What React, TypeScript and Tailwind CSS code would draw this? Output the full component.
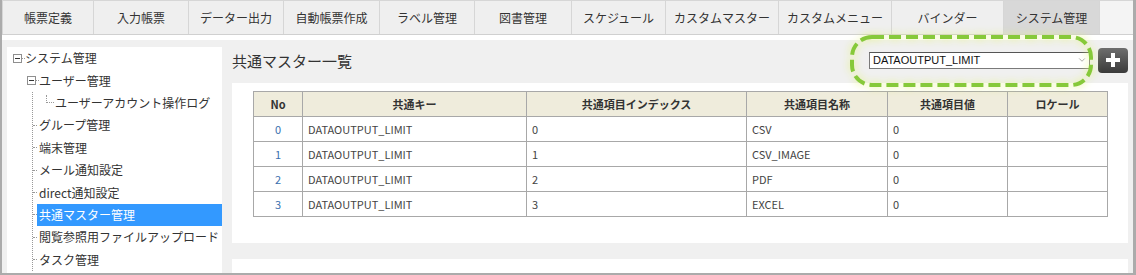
import { ChevronDown } from 'lucide-react';

const tabs = [
  { label: '帳票定義', w: 'w-[92px]' },
  { label: '入力帳票', w: 'w-[95px]' },
  { label: 'データー出力', w: 'w-[95px]' },
  { label: '自動帳票作成', w: 'w-[96px]' },
  { label: 'ラベル管理', w: 'w-[95px]' },
  { label: '図書管理', w: 'w-[97px]' },
  { label: 'スケジュール', w: 'w-[94px]' },
  { label: 'カスタムマスター', w: 'w-[113px]' },
  { label: 'カスタムメニュー', w: 'w-[113px]' },
  { label: 'バインダー', w: 'w-[112px]' },
  { label: 'システム管理', w: 'w-[96px]', active: true },
];

const menu = [
  'グループ管理',
  '端末管理',
  'メール通知設定',
  'direct通知設定',
  '共通マスター管理',
  '閲覧参照用ファイルアップロード',
  'タスク管理',
];

const rows = [
  { no: 0, key: 'DATAOUTPUT_LIMIT', idx: '0', name: 'CSV', val: '0' },
  { no: 1, key: 'DATAOUTPUT_LIMIT', idx: '1', name: 'CSV_IMAGE', val: '0' },
  { no: 2, key: 'DATAOUTPUT_LIMIT', idx: '2', name: 'PDF', val: '0' },
  { no: 3, key: 'DATAOUTPUT_LIMIT', idx: '3', name: 'EXCEL', val: '0' },
];

function MinusBox() {
  return (
    <svg width="9" height="9" viewBox="0 0 9 9" className="shrink-0">
      <rect x="0.5" y="0.5" width="8" height="8" fill="#fff" stroke="#8f8f8f" />
      <line x1="2" y1="4.5" x2="7" y2="4.5" stroke="#333" />
    </svg>
  );
}

export default function App() {
  return (
    <div className="w-[1136px] h-[275px] overflow-hidden bg-[#f0f0f0] border-l-2 border-r-[3px] border-b-2 border-[#ababab] font-['Noto_Sans_CJK_JP',sans-serif] text-[#333] flex flex-col">
      {/* Top tabs */}
      <div className="h-[35px] flex bg-[#f4f4f4] border-b border-[#d0d0d0] shrink-0">
        {tabs.map((t) => (
          <div
            key={t.label}
            className={`${t.w} h-full flex items-center justify-center text-[12px] border-r border-t border-[#d6d6d6] first:border-l ${
              t.active ? 'bg-[#d8d8d8]' : 'bg-[#efefef]'
            }`}
          >
            {t.label}
          </div>
        ))}
        <div className="flex-1 border-t border-[#d6d6d6]" />
      </div>
      <div className="h-[5px] bg-white shrink-0" />

      {/* Body */}
      <div className="flex-1 flex gap-[10px] pl-[5px] pr-[5px] pt-[7px] min-h-0">
        {/* Sidebar tree */}
        <div className="w-[215px] bg-white text-[12px] leading-none">
          <div className="h-[22.4px] flex items-center pl-[6px]">
            <MinusBox />
            <span className="w-[3px] border-t border-dotted border-[#999]" />
            <span>システム管理</span>
          </div>
          <div className="h-[22.4px] flex items-center pl-[20px]">
            <MinusBox />
            <span className="w-[3px] border-t border-dotted border-[#999]" />
            <span>ユーザー管理</span>
          </div>
          <div className="ml-[25px] border-l border-dotted border-[#999]">
            <div className="h-[22.4px] flex items-center pl-[13px]">
              <span className="w-[8px] h-[8px] -mt-[8px] border-l border-b border-dotted border-[#999]" />
              <span className="ml-[1px]">ユーザーアカウント操作ログ</span>
            </div>
            {menu.map((m) => (
              <div key={m} className="h-[22.4px] flex items-center">
                <span className="w-[4px] border-t border-dotted border-[#999]" />
                <span
                  className={`flex-1 h-full flex items-center pl-[2px] whitespace-nowrap ${
                    m === '共通マスター管理' ? 'bg-[#3399ff] text-white' : ''
                  }`}
                >
                  {m}
                </span>
              </div>
            ))}
          </div>
        </div>

        {/* Main */}
        <div className="w-[896px] flex flex-col">
          <div className="h-[26px] mb-[10px] flex items-center justify-between">
            <h1 className="text-[15px] text-[#333] pt-[2px]">共通マスター一覧</h1>
            <div className="flex items-center gap-[8px]">
              <div className="relative">
                <div className="w-[221px] h-[17px] bg-white border border-[#7a7a7a] border-t-[#555] flex items-center justify-between pl-[3px] pr-[2px] font-['Liberation_Sans',sans-serif] text-[11px] text-[#111]">
                  <span>DATAOUTPUT_LIMIT</span>
                  <ChevronDown size={10} strokeWidth={1.5} className="text-[#777]" />
                </div>
                {/* highlight mark */}
                <svg
                  className="absolute -left-[19px] -top-[17px] drop-shadow-[0_0_4px_#e3f27a] pointer-events-none"
                  width="243"
                  height="52"
                  viewBox="0 0 243 52"
                >
                  <rect
                    x="2"
                    y="2"
                    width="239"
                    height="48"
                    rx="20"
                    fill="none"
                    stroke="#86c93a"
                    strokeWidth="4"
                    strokeDasharray="12 5"
                  />
                </svg>
              </div>
              <button className="w-[30px] h-[25px] rounded-[4px] bg-gradient-to-b from-[#6e6e6e] to-[#3a3a3a] flex items-center justify-center">
                <svg width="16" height="16" viewBox="0 0 16 16">
                  <rect x="6" y="1" width="4" height="14" fill="#fff" />
                  <rect x="1" y="6" width="14" height="4" fill="#fff" />
                </svg>
              </button>
            </div>
          </div>

          <div className="bg-white pl-[21px] pr-[21px] pt-[8px] pb-[26px]">
            <table className="w-[854px] table-fixed border-collapse text-[11px]">
              <colgroup>
                <col className="w-[49px]" />
                <col className="w-[224px]" />
                <col className="w-[220px]" />
                <col className="w-[141px]" />
                <col className="w-[120px]" />
                <col className="w-[100px]" />
              </colgroup>
              <thead>
                <tr className="h-[25px] bg-[#efecdc]">
                  {['No', '共通キー', '共通項目インデックス', '共通項目名称', '共通項目値', 'ロケール'].map((h) => (
                    <th key={h} className="border border-[#a8a8a8] font-bold text-[#333] text-center p-0">
                      {h}
                    </th>
                  ))}
                </tr>
              </thead>
              <tbody>
                {rows.map((r) => (
                  <tr key={r.no} className="h-[25px] text-[#444]">
                    <td className="border border-[#a8a8a8] text-center text-[#3a6fae]">{r.no}</td>
                    <td className="border border-[#a8a8a8] pl-[5px]">{r.key}</td>
                    <td className="border border-[#a8a8a8] pl-[5px]">{r.idx}</td>
                    <td className="border border-[#a8a8a8] pl-[5px]">{r.name}</td>
                    <td className="border border-[#a8a8a8] pl-[5px]">{r.val}</td>
                    <td className="border border-[#a8a8a8] pl-[5px]"></td>
                  </tr>
                ))}
              </tbody>
            </table>
          </div>

          <div className="h-[16px] shrink-0" />
          <div className="flex-1 bg-white" />
        </div>
      </div>
    </div>
  );
}
